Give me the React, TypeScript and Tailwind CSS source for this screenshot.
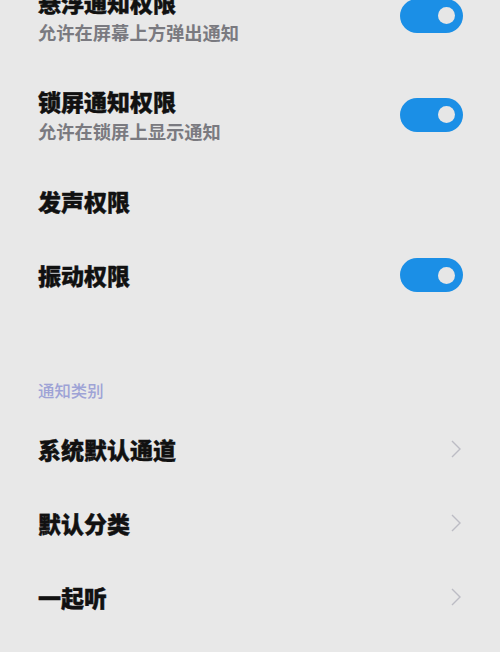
import React from 'react';

interface ToggleRow {
    title: string;
    subtitle?: string;
    on?: boolean;
}

const toggleRows: ToggleRow[] = [
    { title: '悬浮通知权限', subtitle: '允许在屏幕上方弹出通知', on: true },
    { title: '锁屏通知权限', subtitle: '允许在锁屏上显示通知', on: true },
    { title: '发声权限' },
    { title: '振动权限', on: true },
];

const categories = ['系统默认通道', '默认分类', '一起听'];

function Switch() {
    // taller than the text line, so pull it into the row padding
    return (
        <div className="-my-[3px] flex h-[34px] w-[63px] shrink-0 items-center justify-end rounded-full bg-[#1b8fe6] pr-[8px]">
            <div className="h-[17px] w-[17px] rounded-full bg-[#e6e6e6]" />
        </div>
    );
}

function Chevron() {
    return (
        <svg width="12" height="18" viewBox="0 0 12 18" className="shrink-0">
            <polyline points="2,1 10,9 2,17" fill="none" stroke="#bcbcc4" strokeWidth="1.4" />
        </svg>
    );
}

const titleCls = 'text-[23px] font-black leading-[28px] text-[#111] [-webkit-text-stroke:0.4px_#111]';

export default function App() {
    return (
        <div
            className="h-[652px] w-[500px] overflow-hidden bg-[#e8e8e8]"
            style={{ fontFamily: '"Noto Sans CJK SC", "Noto Sans", sans-serif' }}
        >
            <div className="-mt-[34px]">
                {toggleRows.map((row) => (
                    <div
                        key={row.title}
                        className={`flex items-center justify-between pl-[38px] pr-[37px] ${row.subtitle ? 'py-[21.5px]' : 'py-[23px]'}`}
                    >
                        <div className="flex flex-col">
                            <span className={titleCls}>{row.title}</span>
                            {row.subtitle && (
                                <span className="mt-[4px] text-[18.3px] font-bold leading-[24px] text-[#7a7a80]">
                                    {row.subtitle}
                                </span>
                            )}
                        </div>
                        {row.on && <Switch />}
                    </div>
                ))}

                <div className="pb-[10px] pl-[38px] pt-[66px] text-[16.4px] font-medium leading-[24px] text-[#9ea3d6]">
                    通知类别
                </div>

                {categories.map((name) => (
                    <div key={name} className="flex items-center justify-between py-[23px] pl-[38px] pr-[38px]">
                        <span className={titleCls}>{name}</span>
                        <Chevron />
                    </div>
                ))}
            </div>
        </div>
    );
}
